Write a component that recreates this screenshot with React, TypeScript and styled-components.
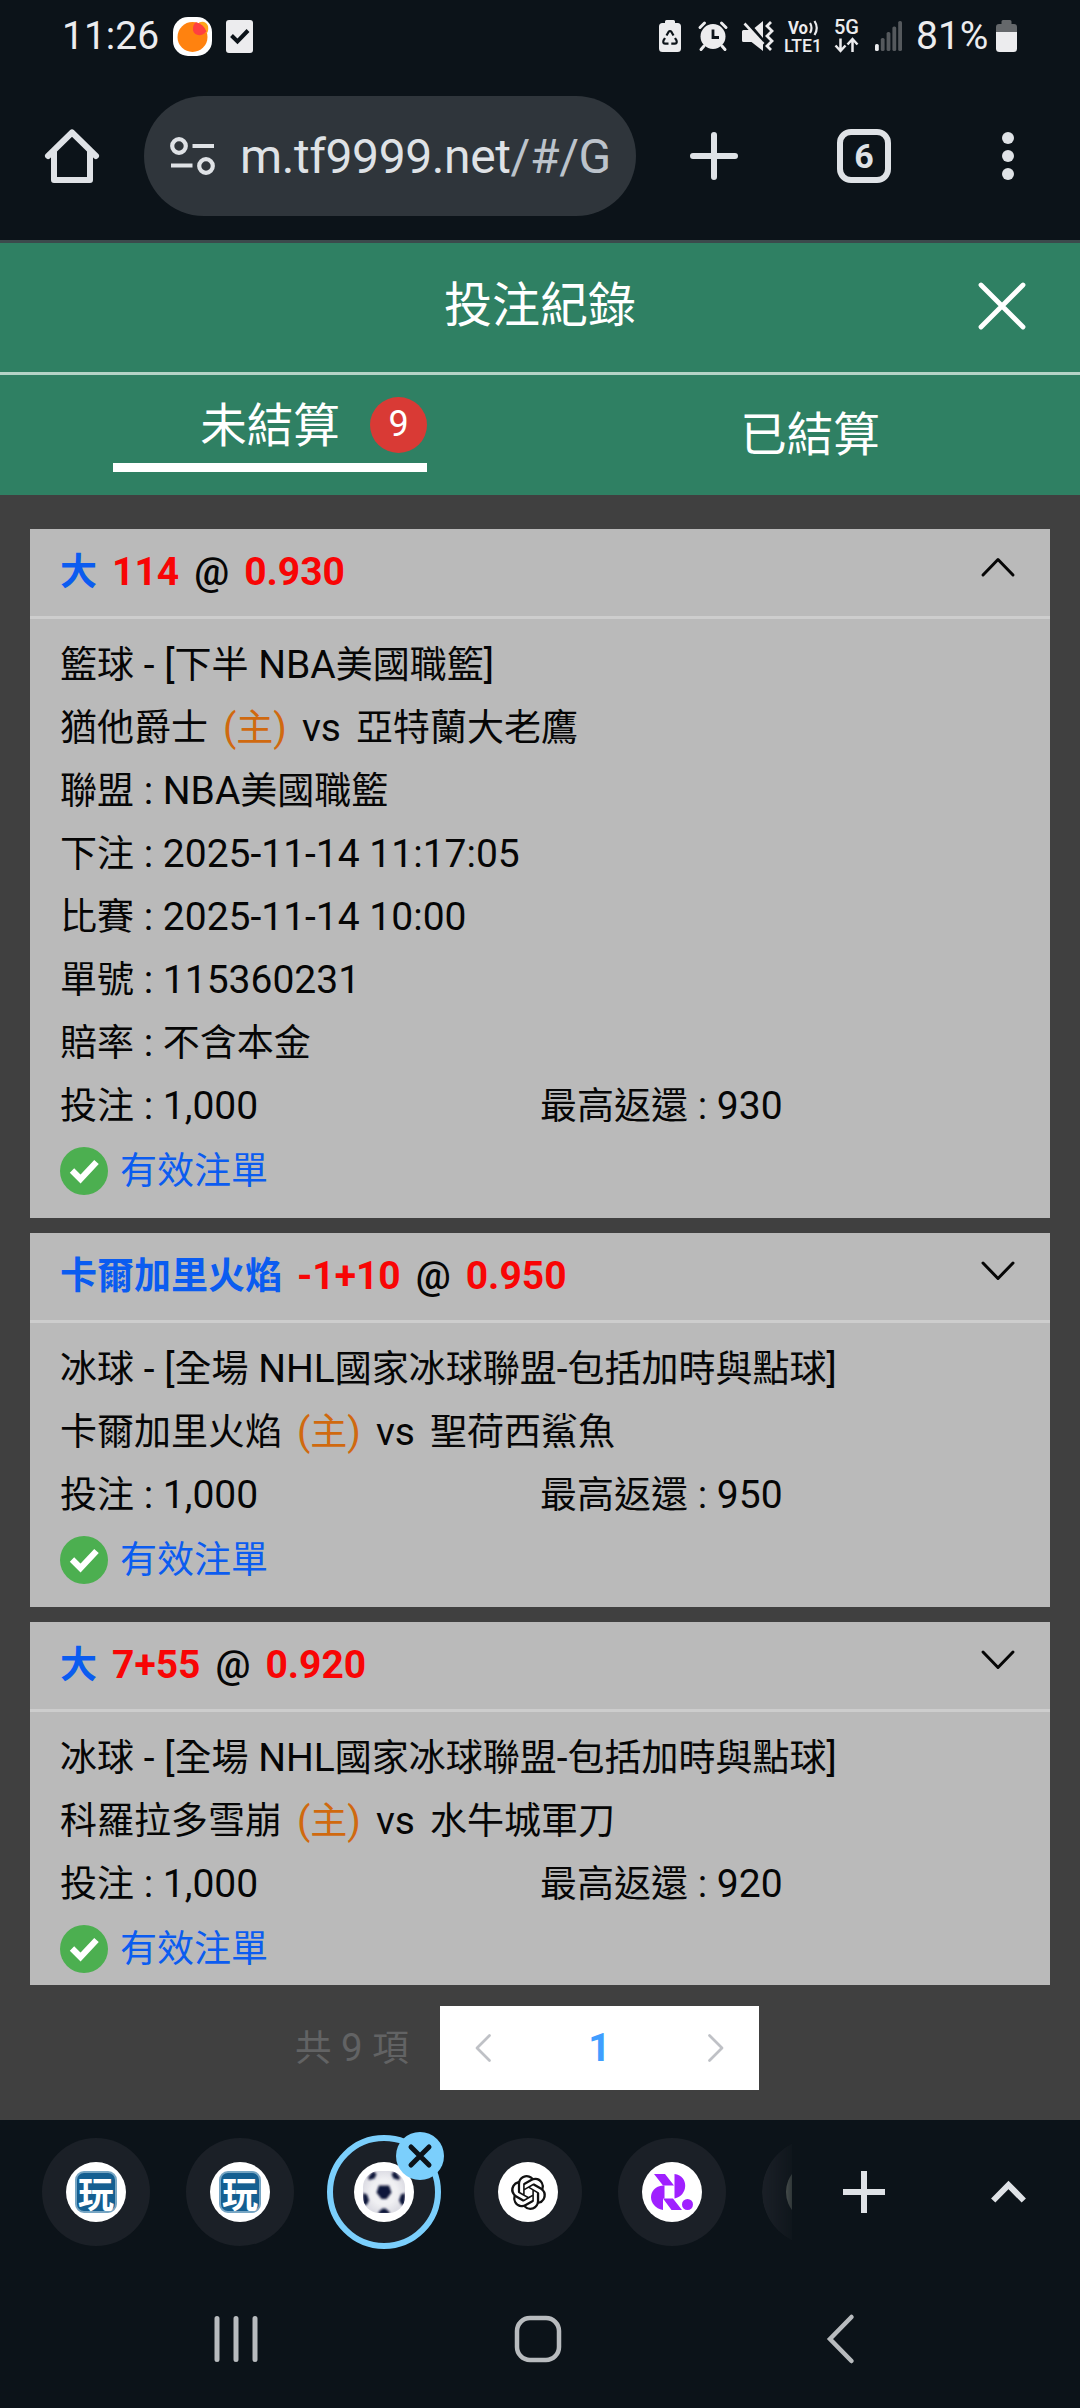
import React from 'react';
import styled, { createGlobalStyle, css } from 'styled-components';
import { SiOpenai } from 'react-icons/si';

const GlobalStyle = createGlobalStyle`
  * { box-sizing: border-box; }
  body {
    margin: 0;
    background: #0c1319;
    font-family: Roboto, 'Noto Sans CJK TC', sans-serif;
  }
  svg { display: block; flex: none; overflow: visible; }
`;

const Screen = styled.div`
  width: 1080px;
  height: 2408px;
  display: flex;
  flex-direction: column;
  overflow: hidden;
  background: #0c1319;
`;

/* ---------- text with separate sizes for Han and Latin runs ---------- */

const Han = styled.span`
  font-family: 'Noto Sans CJK TC', sans-serif;
  font-size: 0.949em;
  line-height: 1;
`;

const HAN_RUN = /([\u4e00-\u9fff]+)/;

function Mixed({ children }: { children: string }) {
  return (
    <>
      {children.split(HAN_RUN).map((run, i) => (i % 2 ? <Han key={i}>{run}</Han> : run))}
    </>
  );
}

/* ---------- status bar ---------- */

const StatusBar = styled.header`
  height: 72px;
  padding: 0 63px 0 62px;
  display: flex;
  align-items: center;
  justify-content: space-between;
  color: #ececee;
`;

const StatusGroup = styled.div`
  display: flex;
  align-items: center;
`;

const Clock = styled.span`
  width: 111px;
  font-size: 39px;
  line-height: 40px;
`;

const Percent = styled.span`
  margin-left: 13px;
  width: 80px;
  font-size: 39px;
  line-height: 40px;
  white-space: nowrap;
`;

const TinyStack = styled.div<{ $left: number; $width: number }>`
  margin-left: ${p => p.$left}px;
  width: ${p => p.$width}px;
`;

const OrangeApp = () => (
  <svg width="39" height="39" viewBox="0 0 39 39">
    <rect width="39" height="39" rx="15" fill="#fff" />
    <circle cx="19.5" cy="20" r="15" fill="#ff820f" />
    <path d="M26 5.5c7-3 11 3 8.500 10-4 2-9-3-8.500-10z" fill="#ffa61a" />
    <path d="M23 5.300A15 15 0 0 1 33.500 14.500c-4 5-12 5-13.500-1-.5-4 1-7 3-8.200z" fill="#ff4040" />
  </svg>
);

const TaskBox = styled.div`
  margin-left: 14px;
`;

const TaskIcon = () => (
  <TaskBox>
    <svg width="27" height="33" viewBox="0 0 27 33">
      <rect width="27" height="33" rx="3" fill="#ececee" />
      <path d="M5.500 15.500l6 6 10.500-11" fill="none" stroke="#0c1319" strokeWidth="4" />
    </svg>
  </TaskBox>
);

const SaverIcon = () => (
  <svg width="22" height="32" viewBox="0 0 22 32">
    <path d="M6 3V1.500Q6 0 7.500 0h7Q16 0 16 1.500V3h2.500Q22 3 22 6.500v22q0 3.500-3.500 3.500h-15Q0 32 0 28.500v-22Q0 3 3.500 3z" fill="#ececee" />
    <g fill="none" stroke="#0c1319" strokeWidth="2.200">
      <path d="M7.500 15.500l2-3.500q1.500-2 3 0l2 3.500" />
      <path d="M16 18l1.500 2.500q1 3-2 3.200h-3.200" />
      <path d="M9.500 23.700H6.500q-3-.2-2-3.200L6 18" />
    </g>
  </svg>
);

const AlarmIcon = () => (
  <svg width="30" height="30" viewBox="0 0 30 30">
    <g stroke="#ececee" strokeWidth="3" strokeLinecap="round">
      <path d="M2 6.500L6.500 2M28 6.500L23.500 2M6 25l-3 3.500M24 25l3 3.500" />
    </g>
    <circle cx="15" cy="15.500" r="12.500" fill="#ececee" />
    <path d="M15 8.500v8h6" fill="none" stroke="#0c1319" strokeWidth="2.800" />
  </svg>
);

const MuteIcon = () => (
  <svg width="32" height="31" viewBox="0 0 32 31">
    <path d="M1.500 9H8l13 14v7L9.500 21H1.500Q0 21 0 19.500v-9Q0 9 1.500 9zM12.500 7L21 0v17z" fill="#ececee" />
    <path d="M2.500 2.500l19 20.500" stroke="#ececee" strokeWidth="2.600" />
    <path d="M29 1l-4 4 5 5-5 5 5 5-5 5 4 4" fill="none" stroke="#ececee" strokeWidth="2.800" />
  </svg>
);

const VolteIcon = () => (
  <svg width="39" height="34" viewBox="0 0 39 34">
    <text x="4" y="14.500" fontFamily="Roboto" fontWeight="700" fontSize="18" textLength="20" lengthAdjust="spacingAndGlyphs" fill="#ececee">Vo</text>
    <g fill="none" stroke="#ececee" strokeWidth="2.200">
      <path d="M26 4q3 5 0 10M30.500 2q4.500 7 0 14" />
    </g>
    <text x="0" y="32.500" fontFamily="Roboto" fontWeight="500" fontSize="19" textLength="38" lengthAdjust="spacingAndGlyphs" fill="#ececee">LTE1</text>
  </svg>
);

const FiveGIcon = () => (
  <svg width="26" height="34" viewBox="0 0 26 34">
    <text x="0" y="15" fontFamily="Roboto" fontWeight="500" fontSize="20" textLength="25" lengthAdjust="spacingAndGlyphs" fill="#ececee">5G</text>
    <g fill="none" stroke="#ececee" strokeWidth="2.500">
      <path d="M6.500 19.500v12M1.500 26.500l5 5.500 5-5.500" />
      <path d="M18.500 33V21M13.500 25.500l5-5.500 5 5.500" />
    </g>
  </svg>
);

const SignalIcon = () => (
  <svg width="28" height="30" viewBox="0 0 28 30">
    {[23, 17, 11, 5.5, 0].map((y, i) => (
      <rect key={y} x={i * 5.8} y={y} width="3.800" height={30 - y} rx="1.600" fill={i ? '#55595d' : '#ececee'} />
    ))}
  </svg>
);

const BatteryIcon = () => (
  <svg width="21" height="32" viewBox="0 0 21 32">
    <path d="M5.500 4V1.500Q5.500 0 7 0h7q1.500 0 1.500 1.500V4H18q3 0 3 3v6H0V7q0-3 3-3z" fill="#65686b" />
    <path d="M0 12h21v16.500Q21 32 17.500 32h-14Q0 32 0 28.500z" fill="#ececee" />
  </svg>
);

/* ---------- browser toolbar ---------- */

const Toolbar = styled.nav`
  height: 171px;
  padding: 24px 66px 0 45px;
  border-bottom: 3px solid #3c494c;
  display: flex;
  align-items: flex-start;
`;

const ToolbarIcon = styled.div<{ $left?: number }>`
  height: 120px;
  margin-left: ${p => p.$left ?? 0}px;
  display: flex;
  align-items: center;
`;

const AddressPill = styled.div`
  width: 492px;
  height: 120px;
  margin-left: 45px;
  padding-left: 26px;
  border-radius: 60px;
  background: #2f353b;
  display: flex;
  align-items: center;
`;

const Url = styled.div`
  margin-left: 25px;
  padding-top: 1px;
  white-space: nowrap;
  font-family: Roboto, sans-serif;
  font-size: 48px;
  line-height: 64px;
  letter-spacing: -0.4px;
  color: #dfe2e6;
`;

const UrlPath = styled.span`
  color: #bcc3cb;
`;

const TabCount = styled.div`
  width: 54px;
  height: 54px;
  border: 6px solid #dfe2e6;
  border-radius: 14px;
  display: flex;
  align-items: center;
  justify-content: center;
  font-size: 34px;
  font-weight: 700;
  line-height: 40px;
  color: #dfe2e6;
`;

/* ---------- page header ---------- */

const TitleBar = styled.div`
  height: 132px;
  padding: 0 54px;
  border-bottom: 3px solid #b5d4c7;
  background: #2f8063;
  display: grid;
  grid-template-columns: 1fr auto 1fr;
  align-items: center;
  color: #fff;
`;

const Title = styled.h1`
  grid-column: 2;
  margin: 0;
  padding-bottom: 14px;
  font: 400 48px/64px 'Noto Sans CJK TC', sans-serif;
`;

const CloseButton = styled.div`
  justify-self: end;
  padding-bottom: 3px;
`;

const Tabs = styled.div`
  height: 120px;
  background: #2f8063;
  display: grid;
  grid-template-columns: 1fr 1fr;
  justify-items: center;
  align-items: center;
  color: #fff;
`;

const Tab = styled.div<{ $active?: boolean }>`
  position: relative;
  width: 314px;
  height: 74px;
  line-height: 66px;
  font-family: 'Noto Sans CJK TC', sans-serif;
  font-size: 46.500px;
  text-align: center;
  ${p => p.$active && css`
    line-height: 48px;
    border-bottom: 9px solid #fff;
  `}
`;

const Badge = styled.span`
  position: absolute;
  right: 0;
  top: -1px;
  width: 57px;
  height: 56px;
  border-radius: 50%;
  background: #d93a35;
  font: 400 36px/55px Roboto, sans-serif;
`;

/* ---------- bet list ---------- */

const Content = styled.main`
  height: 1625px;
  background: #404040;
  display: flex;
  flex-direction: column;
`;

const List = styled.div`
  height: 1490px;
  padding: 34px 30px 0;
  overflow: hidden;
  display: flex;
  flex-direction: column;
  gap: 15px;
`;

const Card = styled.article`
  flex: none;
  background: #bababa;
  color: #060606;
  font-size: 39px;
  line-height: 63px;
`;

const CardHeader = styled.div`
  height: 90px;
  padding: 0 30px;
  border-bottom: 3px solid #cdcdcd;
  display: flex;
  align-items: center;
  gap: 15px;
  font-weight: 700;
`;

const Pick = styled.span`
  color: #0b5cf0;
`;

const Figure = styled.span`
  color: #f80505;
`;

const At = styled.span`
  font-weight: 500;
`;

const Toggle = styled.div`
  margin-left: auto;
  padding: 0 5px 12px 0;
`;

const CardBody = styled.div`
  padding: 15px 30px 14px;
`;

const Line = styled.div`
  display: flex;
  height: 63px;
  gap: 15px;
  white-space: nowrap;
`;

const Amounts = styled.div`
  display: grid;
  grid-template-columns: 1fr 1fr;
  height: 63px;
`;

const Home = styled.span`
  color: #d0690f;
`;

const Valid = styled.div`
  height: 66px;
  display: flex;
  align-items: center;
  gap: 12px;
  color: #0b5cf0;
`;

/* ---------- pagination ---------- */

const Pagination = styled.div`
  height: 84px;
  margin-top: 21px;
  padding-left: 295px;
  display: flex;
  align-items: center;
`;

const Total = styled.span`
  width: 145px;
  padding-bottom: 1px;
  color: #626364;
  font-size: 38.500px;
`;

const Pager = styled.div`
  width: 319px;
  height: 84px;
  padding: 0 35px;
  background: #fff;
  display: flex;
  align-items: center;
  justify-content: space-between;
`;

const PageNumber = styled.span`
  color: #409eff;
  font-size: 39px;
  font-weight: 700;
`;

/* ---------- tab strip and system navigation ---------- */

const TabStrip = styled.div`
  height: 144px;
  padding-left: 42px;
  display: flex;
  align-items: center;
`;

const Favicons = styled.div`
  width: 750px;
  height: 144px;
  overflow: hidden;
  display: flex;
  align-items: center;
  gap: 36px;
`;

const SiteCircle = styled.div<{ $active?: boolean; $faded?: boolean }>`
  position: relative;
  flex: none;
  width: 108px;
  height: 108px;
  border-radius: 50%;
  background: #1b2027;
  display: flex;
  align-items: center;
  justify-content: center;
  ${p => p.$active && css`
    width: 114px;
    height: 114px;
    margin: 0 -3px;
    border: 6px solid #7bcffc;
  `}
  ${p => p.$faded && css`
    mask-image: linear-gradient(to right, #000 0, rgba(0, 0, 0, 0.25) 30px);
  `}
`;

const SiteIcon = styled.div<{ $dim?: boolean }>`
  width: 60px;
  height: 60px;
  border-radius: 50%;
  background: ${p => (p.$dim ? '#9aa095' : '#fff')};
  color: #111;
  display: flex;
  align-items: center;
  justify-content: center;
`;

const CloseBadge = styled.div`
  position: absolute;
  top: -9px;
  right: -9px;
  width: 48px;
  height: 48px;
  border-radius: 50%;
  background: #7bcffc;
  display: flex;
  align-items: center;
  justify-content: center;
`;

const StripActions = styled.div`
  margin-left: 51px;
  display: flex;
  align-items: center;
  gap: 106px;
`;

const SystemNav = styled.footer`
  flex: 1;
  padding: 6px 226px 0 214px;
  display: grid;
  grid-template-columns: 300px 1fr 27px;
  align-items: center;
`;

const PlayTile = styled.div`
  width: 42px;
  height: 42px;
  border: 2px solid #76a5c3;
  border-radius: 9px;
  background: #155f91;
  color: #fff;
  font: 700 36px/36px 'Noto Sans CJK TC', sans-serif;
  display: flex;
  align-items: center;
  justify-content: center;
`;

const SoccerIcon = () => (
  <svg width="42" height="42" viewBox="0 0 42 42">
    <defs>
      <radialGradient id="ball">
        <stop offset="0.600" stopColor="#f0f0f3" />
        <stop offset="1" stopColor="#dedee5" />
      </radialGradient>
      <clipPath id="ballClip"><rect width="42" height="42" rx="16" /></clipPath>
      <filter id="soft"><feGaussianBlur stdDeviation="0.900" /></filter>
    </defs>
    <g clipPath="url(#ballClip)">
      <rect width="42" height="42" fill="url(#ball)" />
      <g fill="#10163b" filter="url(#soft)">
        <path d="M16 14.500h10l2.500 7-5 6.500h-5L13.500 21.500z" />
        <path d="M5 6.500L10 0l3.500 3-2 4.500L6 9zM37 6.500L32 0l-3.500 3 2 4.500L36 9zM0 22l4 1.500 2 6L3.500 34H0zM42 22l-4 1.500-2 6 2.500 4.500H42zM15.500 41l4-3.500h3l4 3.500v2h-11z" />
      </g>
    </g>
  </svg>
);

const PurpleIcon = () => (
  <svg width="42" height="36" viewBox="0 0 42 36" fill="#a020ff">
    <path d="M3 0h11l9 11.500H12zM12 24.500h10L31 36H20.500z" />
    <path d="M23.500 0c15 2 13.500 22 0 24.500z" />
    <path d="M12 11.500C-4 13-4 33 12 36z" />
    <path d="M12 11.500h1.500V24.500H12z" />
    <circle cx="36.500" cy="30.500" r="5.500" />
  </svg>
);

const Chevron = ({ d, w, h, color, width }: { d: string; w: number; h: number; color: string; width: number }) => (
  <svg width={w} height={h} viewBox={`0 0 ${w} ${h}`} fill="none" stroke={color} strokeWidth={width} strokeLinecap="round" strokeLinejoin="round">
    <path d={d} />
  </svg>
);

const CheckIcon = () => (
  <svg width="48" height="48" viewBox="0 0 48 48">
    <circle cx="24" cy="24" r="24" fill="#4caf50" />
    <path d="M12 23.500l8.500 8.500L36.500 15" fill="none" stroke="#fff" strokeWidth="6.200" />
  </svg>
);

type Bet = {
  pick: string;
  line: string;
  odds: string;
  event: string;
  home: string;
  away: string;
  details?: string[];
  max: string;
};

const bets: Bet[] = [
  {
    pick: '大', line: '114', odds: '0.930',
    event: '籃球 - [下半 NBA美國職籃]', home: '猶他爵士', away: '亞特蘭大老鷹',
    details: [
      '聯盟 : NBA美國職籃',
      '下注 : 2025-11-14 11:17:05',
      '比賽 : 2025-11-14 10:00',
      '單號 : 115360231',
      '賠率 : 不含本金',
    ],
    max: '930',
  },
  {
    pick: '卡爾加里火焰', line: '-1+10', odds: '0.950',
    event: '冰球 - [全場 NHL國家冰球聯盟-包括加時與點球]', home: '卡爾加里火焰', away: '聖荷西鯊魚',
    max: '950',
  },
  {
    pick: '大', line: '7+55', odds: '0.920',
    event: '冰球 - [全場 NHL國家冰球聯盟-包括加時與點球]', home: '科羅拉多雪崩', away: '水牛城軍刀',
    max: '920',
  },
];

function BetCard({ bet }: { bet: Bet }) {
  return (
    <Card>
      <CardHeader>
        <Pick><Mixed>{bet.pick}</Mixed></Pick>
        <Figure>{bet.line}</Figure>
        <At>@</At>
        <Figure>{bet.odds}</Figure>
        <Toggle>
          <Chevron w={34} h={20} width={3} color="#060606" d={bet.details ? 'M2 18L17 2.500 32 18' : 'M2 2L17 17.500 32 2'} />
        </Toggle>
      </CardHeader>
      <CardBody>
        <Line><span><Mixed>{bet.event}</Mixed></span></Line>
        <Line>
          <span><Mixed>{bet.home}</Mixed></span>
          <Home><Mixed>(主)</Mixed></Home>
          <span>vs</span>
          <span><Mixed>{bet.away}</Mixed></span>
        </Line>
        {bet.details?.map(text => <Line key={text}><span><Mixed>{text}</Mixed></span></Line>)}
        <Amounts>
          <span><Mixed>投注 : 1,000</Mixed></span>
          <span><Mixed>{`最高返還 : ${bet.max}`}</Mixed></span>
        </Amounts>
        <Valid>
          <CheckIcon />
          <span><Mixed>有效注單</Mixed></span>
        </Valid>
      </CardBody>
    </Card>
  );
}

export default function App() {
  return (
    <Screen lang="zh-TW">
      <GlobalStyle />
      <StatusBar>
        <StatusGroup>
          <Clock>11:26</Clock>
          <OrangeApp />
          <TaskIcon />
        </StatusGroup>
        <StatusGroup>
          <SaverIcon />
          <TinyStack $left={17} $width={30}><AlarmIcon /></TinyStack>
          <TinyStack $left={14} $width={32}><MuteIcon /></TinyStack>
          <TinyStack $left={10} $width={39}><VolteIcon /></TinyStack>
          <TinyStack $left={11} $width={26}><FiveGIcon /></TinyStack>
          <TinyStack $left={15} $width={28}><SignalIcon /></TinyStack>
          <Percent>81%</Percent>
          <BatteryIcon />
        </StatusGroup>
      </StatusBar>

      <Toolbar>
        <ToolbarIcon>
          <svg width="54" height="54" viewBox="0 0 54 54" fill="none" stroke="#dfe2e6" strokeWidth="6" strokeLinecap="round" strokeLinejoin="round">
            <path d="M3 27L27 3.500 51 27M9 22v29h36V22" />
          </svg>
        </ToolbarIcon>
        <AddressPill>
          <svg width="45" height="38" viewBox="0 0 45 38" fill="none" stroke="#dfe2e6" strokeWidth="4.200">
            <circle cx="9" cy="9" r="6.800" />
            <path d="M22.500 9H44M1 28.500H22.500" />
            <circle cx="36" cy="29" r="6.800" />
          </svg>
          <Url>m.tf9999.net<UrlPath>/#/G</UrlPath></Url>
        </AddressPill>
        <ToolbarIcon $left={54}>
          <svg width="48" height="48" viewBox="0 0 48 48" stroke="#dfe2e6" strokeWidth="6" strokeLinecap="round">
            <path d="M24 3v42M3 24h42" />
          </svg>
        </ToolbarIcon>
        <ToolbarIcon $left={99}><TabCount>6</TabCount></ToolbarIcon>
        <ToolbarIcon $left={111}>
          <svg width="12" height="48" viewBox="0 0 12 48" fill="#dfe2e6">
            <circle cx="6" cy="6" r="6" /><circle cx="6" cy="24" r="6" /><circle cx="6" cy="42" r="6" />
          </svg>
        </ToolbarIcon>
      </Toolbar>

      <TitleBar>
        <Title>投注紀錄</Title>
        <CloseButton>
          <svg width="48" height="48" viewBox="0 0 48 48" stroke="#fff" strokeWidth="4.800" strokeLinecap="round">
            <path d="M3 3l42 42M45 3L3 45" />
          </svg>
        </CloseButton>
      </TitleBar>
      <Tabs>
        <Tab $active>未結算<Badge>9</Badge></Tab>
        <Tab>已結算</Tab>
      </Tabs>

      <Content>
        <List>
          {bets.map(bet => <BetCard key={bet.odds} bet={bet} />)}
        </List>
        <Pagination>
          <Total><Mixed>共 9 項</Mixed></Total>
          <Pager>
            <Chevron w={16} h={28} width={2.8} color="#bfc1c6" d="M14.500 1.500L2 14 14.500 26.500" />
            <PageNumber>1</PageNumber>
            <Chevron w={16} h={28} width={2.8} color="#bfc1c6" d="M1.500 1.500L14 14 1.500 26.500" />
          </Pager>
        </Pagination>
      </Content>

      <TabStrip>
        <Favicons>
          <SiteCircle><SiteIcon><PlayTile>玩</PlayTile></SiteIcon></SiteCircle>
          <SiteCircle><SiteIcon><PlayTile>玩</PlayTile></SiteIcon></SiteCircle>
          <SiteCircle $active>
            <SiteIcon><SoccerIcon /></SiteIcon>
            <CloseBadge>
              <svg width="24" height="24" viewBox="0 0 24 24" stroke="#0c1319" strokeWidth="5" strokeLinecap="round">
                <path d="M3 3l18 18M21 3L3 21" />
              </svg>
            </CloseBadge>
          </SiteCircle>
          <SiteCircle><SiteIcon><SiOpenai size={35} /></SiteIcon></SiteCircle>
          <SiteCircle><SiteIcon><PurpleIcon /></SiteIcon></SiteCircle>
          <SiteCircle $faded><SiteIcon $dim /></SiteCircle>
        </Favicons>
        <StripActions>
          <svg width="42" height="42" viewBox="0 0 42 42" stroke="#dfe2e6" strokeWidth="6">
            <path d="M21 0v42M0 21h42" />
          </svg>
          <svg width="35" height="23" viewBox="0 0 35 23" fill="none" stroke="#dfe2e6" strokeWidth="6">
            <path d="M2.200 19.500L17.500 4l15.300 15.500" />
          </svg>
        </StripActions>
      </TabStrip>

      <SystemNav>
        <svg width="44" height="46" viewBox="0 0 44 46" stroke="#b8bbbe" strokeWidth="5" strokeLinecap="round">
          <path d="M3 2.500v41M22 2.500v41M41 2.500v41" />
        </svg>
        <svg width="48" height="48" viewBox="0 0 48 48" fill="none" stroke="#b8bbbe" strokeWidth="4.500">
          <rect x="3" y="3" width="42" height="42" rx="13" />
        </svg>
        <svg width="27" height="50" viewBox="0 0 27 50" fill="none" stroke="#b8bbbe" strokeWidth="4.500" strokeLinecap="round">
          <path d="M24.500 3L3 25l21.500 22" />
        </svg>
      </SystemNav>
    </Screen>
  );
}
